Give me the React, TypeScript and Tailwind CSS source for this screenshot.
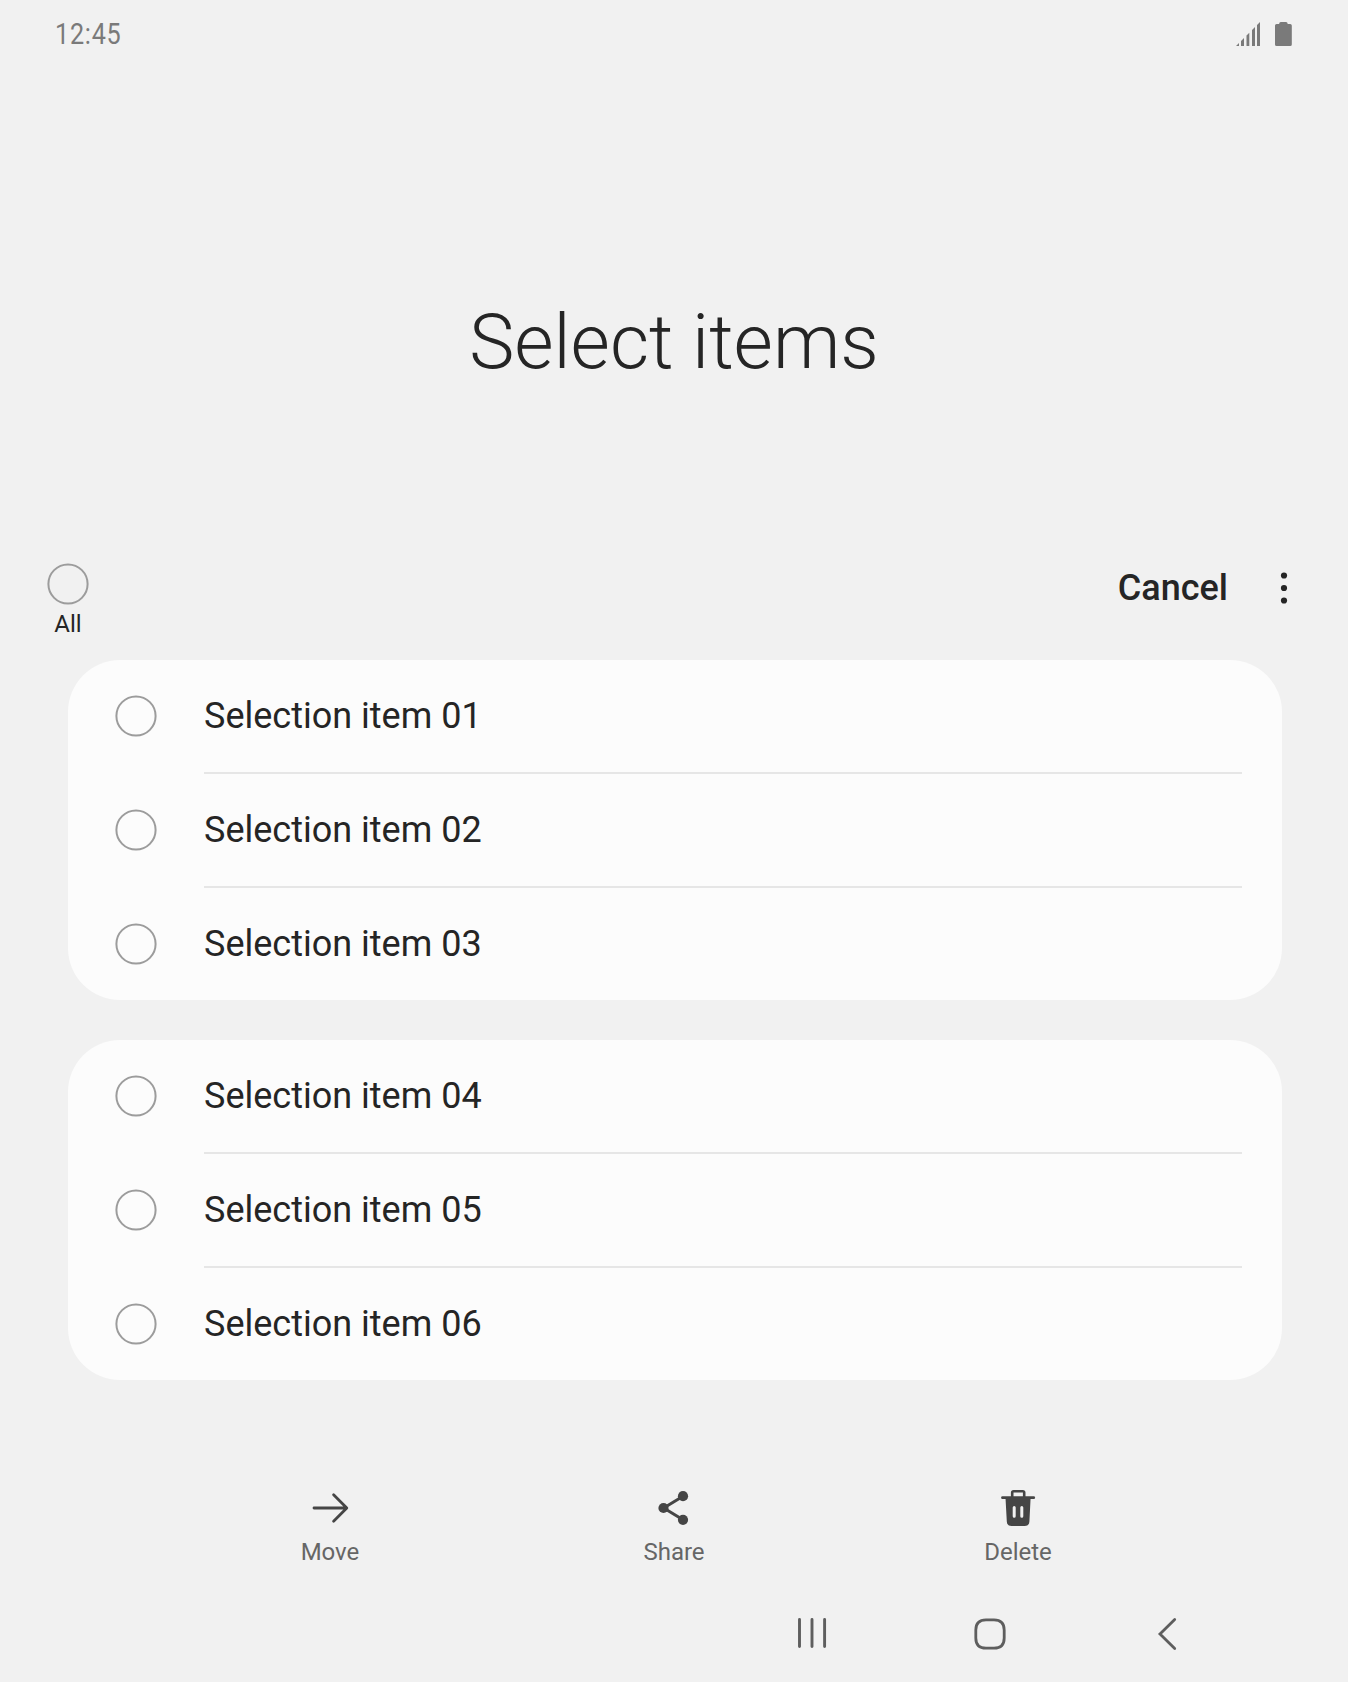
import type { ReactNode } from 'react';

const groups = [
  ['Selection item 01', 'Selection item 02', 'Selection item 03'],
  ['Selection item 04', 'Selection item 05', 'Selection item 06'],
];

function StatusBar() {
  return (
    <header className="flex h-[68px] items-center justify-between pl-[55px] pr-14 text-[#7a7a7a]">
      <span className="origin-left scale-x-[0.84] text-[30px] leading-[68px] tracking-[0.9px]">12:45</span>
      <div className="flex items-center gap-[15px]">
        <svg className="h-6 w-6" viewBox="0 0 24 24" fill="currentColor">
          <path d="M0 24L3 21V24ZM5 24V19L8 16V24ZM10.5 24V13.5L13.3 10.7V24ZM16 24V8L19 5V24ZM21 24V3L24 0V24Z" />
        </svg>
        <svg className="h-6 w-[17px]" viewBox="0 0 17 24" fill="currentColor">
          <path d="M5.8 0H11a1.6 1.6 0 0 1 1.6 1.6V2h2.6A1.6 1.6 0 0 1 16.8 3.6V22.4A1.6 1.6 0 0 1 15.2 24H1.6A1.6 1.6 0 0 1 0 22.4V3.6A1.6 1.6 0 0 1 1.6 2H4.2V1.6A1.6 1.6 0 0 1 5.8 0Z" />
        </svg>
      </div>
    </header>
  );
}

function Radio() {
  return (
    <svg className="size-[42px] shrink-0" viewBox="0 0 42 42" fill="none" stroke="#9c9c9c" strokeWidth="2">
      <circle cx="21" cy="21" r="19.6" />
    </svg>
  );
}

function Toolbar() {
  return (
    <div className="flex h-[124px] items-start justify-between pl-[47px] pr-[54px] pt-[27px]">
      <button className="flex flex-col items-center">
        <Radio />
        <span className="text-[24px] leading-7 pt-[5px]">All</span>
      </button>
      <div className="flex h-[50px] items-center gap-[46px]">
        <button className="text-[36px] font-medium leading-[50px]">Cancel</button>
        <svg className="h-[34px] w-5" viewBox="0 0 20 34" fill="#252525">
          <circle cx="10" cy="4.5" r="3.1" />
          <circle cx="10" cy="17" r="3.1" />
          <circle cx="10" cy="29.5" r="3.1" />
        </svg>
      </div>
    </div>
  );
}

function Card({ items }: { items: string[] }) {
  return (
    <ul className="rounded-[52px] bg-[#fcfcfc] pl-[47px] pr-10">
      {items.map((item, i) => (
        <li key={item} className="flex items-start gap-[47px]">
          <div className="flex h-28 items-center">
            <Radio />
          </div>
          <div className={i < items.length - 1 ? 'flex-1 border-b-2 border-[#e6e6e6]' : 'flex-1'}>
            <p className="text-[36px] leading-[112px]">{item}</p>
          </div>
        </li>
      ))}
    </ul>
  );
}

function Action({ label, children }: { label: string; children: ReactNode }) {
  return (
    <button className="flex w-[344px] flex-col items-center text-[#454545]">
      <svg className="size-12" viewBox="0 0 48 48" fill="none" stroke="currentColor">
        {children}
      </svg>
      <span className="pt-[6px] text-[24px] leading-7 text-[#666666]">{label}</span>
    </button>
  );
}

function NavBar() {
  return (
    <nav className="flex h-24 items-center gap-[130px] pl-[788px]">
      <svg className="size-12" viewBox="0 0 48 48" fill="none" stroke="#5e5e5e" strokeWidth="2.9" strokeLinecap="round">
        <path d="M11.5 9.5V36.5M24 9.5V36.5M36.6 9.5V36.5" />
      </svg>
      <svg className="size-12" viewBox="0 0 48 48" fill="none" stroke="#5e5e5e" strokeWidth="2.8">
        <path d="M20 9.8H28C35 9.8 38.2 13 38.2 20V28C38.2 35 35 38.2 28 38.2H20C13 38.2 9.8 35 9.8 28V20C9.8 13 13 9.8 20 9.8Z" />
      </svg>
      <svg className="size-12" viewBox="0 0 48 48" fill="none" stroke="#5e5e5e" strokeWidth="2.8" strokeLinecap="round">
        <path d="M30.7 9.6L16 24L30.7 38.4" />
      </svg>
    </nav>
  );
}

export default function App() {
  return (
    <div className="flex h-[1682px] w-[1348px] flex-col bg-[#f1f1f1] font-['Roboto',sans-serif] text-[#252525]">
      <StatusBar />
      <h1 className="flex h-[468px] items-center justify-center pt-[80px] text-[76px] font-light leading-[88px]">
        Select items
      </h1>
      <Toolbar />
      <main className="flex flex-col gap-10 pl-[68px] pr-[66px]">
        {groups.map((items) => (
          <Card key={items[0]} items={items} />
        ))}
      </main>
      <div className="flex h-[206px] items-start justify-center pt-[104px]">
        <Action label="Move">
          <path d="M8 24H40M27.6 10.8L40.8 24L27.6 37.2" strokeWidth="2.8" strokeLinecap="round" strokeLinejoin="round" />
        </Action>
        <Action label="Share">
          <path d="M33 12.2L13.7 24L33 35.8" strokeWidth="3" />
          <g fill="currentColor" stroke="none">
            <circle cx="13.5" cy="24" r="5.1" />
            <circle cx="33" cy="12.2" r="5.1" />
            <circle cx="33" cy="35.8" r="5.1" />
          </g>
        </Action>
        <Action label="Delete">
          <path d="M18.2 13V8.6a1.4 1.4 0 0 1 1.4-1.4H28.8a1.4 1.4 0 0 1 1.4 1.4V13" strokeWidth="2.6" />
          <path d="M8.5 13.7H39.7" strokeWidth="2.8" strokeLinecap="round" />
          <path
            d="M11.5 14H36.6L35.4 37.6A4.6 4.6 0 0 1 30.8 42H17.4A4.6 4.6 0 0 1 12.8 37.6Z"
            fill="currentColor"
            stroke="none"
          />
          <path d="M20.2 23.4V32.3M27.8 23.4V32.3" stroke="#f1f1f1" strokeWidth="3" strokeLinecap="round" />
        </Action>
      </div>
      <NavBar />
    </div>
  );
}
